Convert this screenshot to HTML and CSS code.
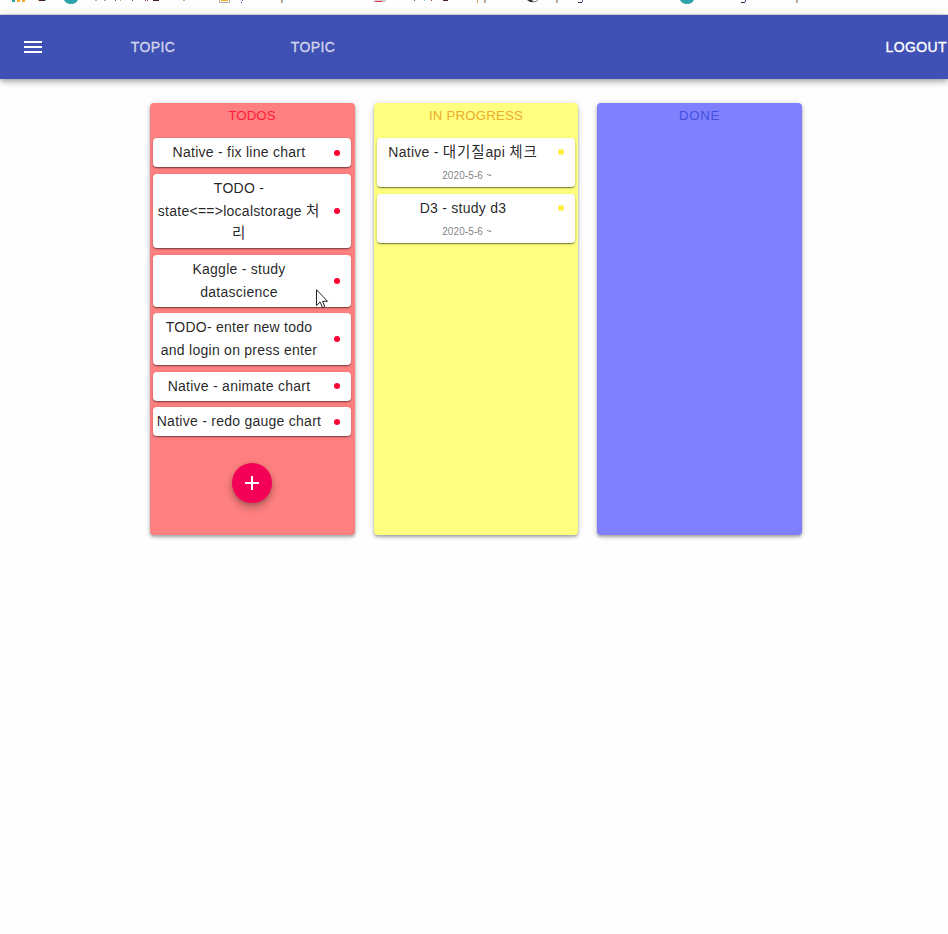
FILE: index.html
```
<!DOCTYPE html>
<html lang="ko">
<head>
<meta charset="utf-8">
<title>Todo board</title>
<link rel="stylesheet" href="styles.css">
</head>
<body>
<div class="bookmarks">
<svg width="948" height="14" viewBox="0 0 948 14" aria-hidden="true">
<path fill="#2aa3aa" d="M12 0h3v2h-3zM64 0h14q-2 4-7 4t-7-4zM680 0h14q-2 4-7 4t-7-4z"/>
<path fill="#f5a623" d="M17 0h3v2h-3zM22 0h3v2h-3zM221 0h7v1h-7z"/>
<path fill="none" stroke="#b8aea6" d="M219.500 0v2.500h10v-2.500"/>
<path fill="#4a2530" d="M39 0h6v1h-6zM153 0h6v1h-6zM443 0h5v1h-5zM741 2h4v1h-4zM578 2h4v1h-4z"/>
<path fill="#e0a050" d="M38 0h1v1h-1zM104 0h1v1h-1zM120 0h1v1h-1zM183 0h1v1h-1zM281 0h1v3h-1zM477 0h1v3h-1zM484 0h1v3h-1zM556 0h1v3h-1zM796 0h1v3h-1z"/>
<path fill="#90b8e8" d="M45 0h1v1h-1zM95 0h2v1h-2zM105 0h1v1h-1zM184 0h1v1h-1zM282 0h1v3h-1zM424 0h1v1h-1zM485 0h1v3h-1zM557 0h1v3h-1zM797 0h1v3h-1z"/>
<path fill="#a04848" d="M115 0h1v1h-1zM132 0h1v1h-1zM145 0h1v1h-1zM147 0h1v1h-1zM414 0h1v1h-1zM431 0h1v1h-1z"/>
<path fill="#4058a8" d="M242 0h1v1h-1zM241 2h1v1h-1zM745 0h1v2h-1zM582 0h1v2h-1z"/>
<path fill="#d8d0d0" d="M374 0h12v2h-12z"/><path fill="#e03048" d="M374 1h8v1h-6z"/>
<path fill="#303030" d="M527 0h5l2 2h-4z"/><path fill="none" stroke="#888" d="M532 2q5 0 6-2"/>
</svg>
</div>
<header class="appbar">
<svg class="menu" width="24" height="24" viewBox="0 0 24 24"><path fill="#fff" d="M3 18h18v-2H3v2zm0-5h18v-2H3v2zm0-7v2h18V6H3z"/></svg>
<nav class="tabs"><a class="tab">TOPIC</a><a class="tab">TOPIC</a></nav>
<a class="logout">LOGOUT</a>
</header>
<main class="board">
<section class="column todos">
<h2 class="title">TODOS</h2>
<div class="cards">
<article class="card"><div class="text">Native - fix line chart</div><i class="dot"></i></article>
<article class="card"><div class="text">TODO -<br>state&lt;==&gt;localstorage <span class="ko">처<br>리</span></div><i class="dot"></i></article>
<article class="card"><div class="text">Kaggle - study<br>datascience</div><i class="dot"></i></article>
<article class="card"><div class="text">TODO- enter new todo<br>and login on press enter</div><i class="dot"></i></article>
<article class="card"><div class="text">Native - animate chart</div><i class="dot"></i></article>
<article class="card"><div class="text">Native - redo gauge chart</div><i class="dot"></i></article>
</div>
<button class="add" aria-label="Add"><svg width="24" height="24" viewBox="0 0 24 24"><path fill="#fff" d="M19 13h-6v6h-2v-6H5v-2h6V5h2v6h6v2z"/></svg></button>
</section>
<section class="column progress">
<h2 class="title">IN PROGRESS</h2>
<div class="cards">
<article class="card dated"><div class="text">Native - <span class="ko">대기질</span>api <span class="ko">체크</span><small class="date">2020-5-6 ~</small></div><i class="dot"></i></article>
<article class="card dated"><div class="text">D3 - study d3<small class="date">2020-5-6 ~</small></div><i class="dot"></i></article>
</div>
</section>
<section class="column done">
<h2 class="title">DONE</h2>
</section>
</main>
<svg class="cursor" width="13" height="20" viewBox="0 0 13 20"><path fill="#fff" stroke="#222" d="M.5.7v15.800l3.600-3.500 2.500 5.700 2.300-1-2.400-5.400h5z"/></svg>
</body>
</html>
```
FILE: styles.css
```
* { box-sizing: border-box; }
html { min-height: 100%; background: #fefefe; }
body {
  margin: 0;
  font-family: "Liberation Sans", "Noto Sans CJK KR", sans-serif;
  color: rgba(0, 0, 0, .87);
}
.bookmarks { height: 15px; border-bottom: 1px solid #d5d7dc; }
.bookmarks svg { display: block; }
.appbar {
  height: 64px;
  display: flex;
  align-items: center;
  padding-left: 21px;
  background: #3f51b5;
  color: #fff;
  box-shadow: 0 2px 4px -1px rgba(0,0,0,.2), 0 4px 5px rgba(0,0,0,.14), 0 1px 10px rgba(0,0,0,.12);
}
.tabs { display: flex; margin-left: 28px; }
.tab, .logout { font-size: 14px; font-weight: 500; letter-spacing: .4px; -webkit-text-stroke: .35px; }
.tab { width: 160px; text-align: center; color: rgba(255,255,255,.7); }
.logout { margin-left: auto; padding-right: 1px; }
.board {
  display: grid;
  grid-template-columns: 205px 204px 205px;
  gap: 19px;
  margin: 24px 0 0 150px;
  padding-bottom: 20px;
}
.column {
  height: 432px;
  padding: 0 3px;
  border-radius: 4px;
  box-shadow: 0 2px 3px rgba(0,0,0,.28), 0 1px 6px rgba(0,0,0,.16);
}
.todos { padding-right: 4px; background: #ff8080; --accent: #ff0033; --title: #ff1a38; --spacing: 0; }
.progress { background: #ffff80; --accent: #fff044; --title: #efab2c; --spacing: .15px; }
.done { background: #8080ff; --title: #4050dc; --spacing: .6px; }
.title {
  margin: 0 0 10.100px;
  font-size: 13.300px;
  line-height: 25px;
  font-weight: 400;
  letter-spacing: var(--spacing);
  text-align: center;
  color: var(--title);
}
.cards { display: flex; flex-direction: column; gap: 6.400px; }
.card {
  display: flex;
  align-items: center;
  padding: 3.100px 11px 3.100px 0;
  border-radius: 4px;
  background: #fff;
  box-shadow: 0 2px 1px -1px rgba(0,0,0,.2), 0 1px 1px rgba(0,0,0,.2), 0 1px 3px rgba(0,0,0,.25);
}
.text {
  flex: 1;
  font-size: 14px;
  line-height: 22.900px;
  letter-spacing: .26px;
  text-align: center;
  white-space: nowrap;
}
.ko { font-size: 14.500px; line-height: 1; letter-spacing: .9px; }
.dot { flex: none; width: 6px; height: 6px; margin-left: 9px; border-radius: 50%; background: var(--accent); }
.dated { align-items: flex-start; height: 49.300px; }
.dated .dot { margin-top: 8px; }
.date { display: block; margin: 1px 0 0 8px; font-size: 10px; letter-spacing: .1px; color: rgba(0,0,0,.54); }
.add {
  display: flex;
  align-items: center;
  justify-content: center;
  width: 40px;
  height: 40px;
  margin: 27px auto 0;
  padding: 0;
  border: 0;
  border-radius: 50%;
  background: #f50057;
  box-shadow: 0 3px 5px -1px rgba(0,0,0,.2), 0 6px 10px rgba(0,0,0,.14), 0 1px 10px rgba(0,0,0,.12);
}
.cursor { position: absolute; left: 316px; top: 289px; }
```
